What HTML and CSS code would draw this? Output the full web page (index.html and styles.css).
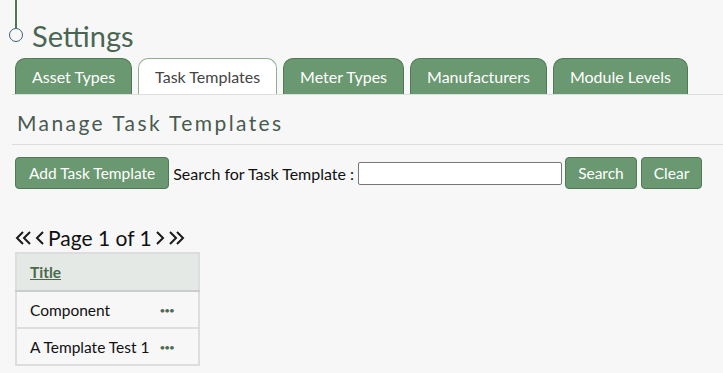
FILE: index.html
```html
<!DOCTYPE html>
<html>
<head>
    <meta charset="UTF-8">
    <meta name="viewport" content="width=device-width, initial-scale=1.0">
    <title>Settings</title>
    <link rel="stylesheet" href="styles.css">
</head>
<body>
    <div class="page">
        <div class="title-row">
            <div class="timeline">
                <div class="timeline-line"></div>
                <div class="timeline-dot"></div>
            </div>
            <h1>Settings</h1>
        </div>

        <ul class="tabs">
            <li class="tab">Asset Types</li>
            <li class="tab active">Task Templates</li>
            <li class="tab">Meter Types</li>
            <li class="tab">Manufacturers</li>
            <li class="tab">Module Levels</li>
        </ul>

        <h2 class="section-title">Manage Task Templates</h2>

        <div class="toolbar">
            <button class="btn btn-add">Add Task Template</button>
            <label for="search">Search for Task Template :</label>
            <input type="text" id="search" class="search-input">
            <button class="btn">Search</button>
            <button class="btn">Clear</button>
        </div>

        <div class="pager">
            <svg class="pager-icon" width="17" height="16" viewBox="0 0 17 16">
                <polyline points="8,2 2,8 8,14" />
                <polyline points="15,2 9,8 15,14" />
            </svg>
            <svg class="pager-icon" width="10" height="16" viewBox="0 0 10 16">
                <polyline points="8,2 2,8 8,14" />
            </svg>
            <span class="pager-text">Page 1 of 1</span>
            <svg class="pager-icon" width="10" height="16" viewBox="0 0 10 16">
                <polyline points="2,2 8,8 2,14" />
            </svg>
            <svg class="pager-icon" width="17" height="16" viewBox="0 0 17 16">
                <polyline points="2,2 8,8 2,14" />
                <polyline points="9,2 15,8 9,14" />
            </svg>
        </div>

        <table class="grid">
            <thead>
                <tr><th colspan="2"><a href="#">Title</a></th></tr>
            </thead>
            <tbody>
                <tr><td>Component</td><td class="more">&bull;&bull;&bull;</td></tr>
                <tr><td>A Template Test 1</td><td class="more">&bull;&bull;&bull;</td></tr>
            </tbody>
        </table>
    </div>
</body>
</html>
```

FILE: styles.css
```css
body {
    font-family: "Lato", "Noto Sans", sans-serif;
    margin: 0;
    background-color: #f7f7f7;
    color: #222;
}
.page {
    padding: 0 0 0 12px;
}
.title-row {
    display: flex;
    align-items: flex-end;
    height: 52px;
}
.timeline {
    align-self: flex-start;
    width: 23px;
    margin-left: -3px;
}
.timeline-line {
    width: 2px;
    height: 28px;
    margin-left: 6px;
    background-color: #4e7556;
}
.timeline-dot {
    width: 14px;
    height: 14px;
    border: 1.5px solid #3f6170;
    border-radius: 50%;
    box-sizing: border-box;
}
h1 {
    margin: 0 0 2px 0;
    font-size: 29px;
    font-weight: normal;
    color: #4a6652;
    line-height: 1;
}
.tabs {
    display: flex;
    gap: 6px;
    list-style: none;
    margin: 6px 0 0 0;
    padding: 0 0 0 3px;
    border-bottom: 1px solid #ddd;
}
.tab {
    height: 36px;
    line-height: 36px;
    padding: 0 16px;
    font-size: 16px;
    color: #fff;
    background-color: #6a9870;
    border: 1px solid #4f7a55;
    border-bottom: none;
    border-radius: 10px 10px 0 0;
    box-sizing: border-box;
}
.tab.active {
    background-color: #fff;
    color: #444;
    border-color: #8fae94;
}
.section-title {
    margin: 0;
    padding: 15px 0 9px 5px;
    font-size: 21px;
    font-weight: normal;
    letter-spacing: 2.4px;
    color: #4a5a50;
    border-bottom: 1px solid #ddd;
}
.toolbar {
    display: flex;
    align-items: center;
    gap: 4px;
    margin-top: 12px;
    padding-left: 3px;
}
.btn {
    height: 32px;
    padding: 0 12px;
    font-family: inherit;
    font-size: 15.5px;
    color: #fff;
    background-color: #6a9870;
    border: 1px solid #4f7a55;
    border-radius: 4px;
}
.btn-add {
    padding: 0 13px;
}
.toolbar label {
    font-size: 16px;
    color: #111;
}
.search-input {
    width: 204px;
    height: 23px;
    box-sizing: border-box;
    border: 1px solid #777;
    border-radius: 2px;
    margin-right: -1px;
}
.pager {
    display: flex;
    align-items: center;
    gap: 3px;
    margin-top: 35px;
    padding-left: 3px;
    font-size: 21px;
    line-height: 28px;
    color: #111;
}
.pager-icon polyline {
    fill: none;
    stroke: #1a1a1a;
    stroke-width: 2;
}
.grid {
    margin-left: 3px;
    border-collapse: collapse;
    border: 2px solid #ddd;
    font-size: 15.5px;
    color: #111;
}
.grid th {
    text-align: left;
    height: 36px;
    padding: 0 13px;
    background-color: #e5e9e5;
    border-bottom: 2px solid #ccc;
}
.grid th a {
    color: #4a6a4e;
}
.grid td {
    height: 35px;
    padding: 0 0 0 13px;
    border-bottom: 2px solid #ddd;
}
.grid td.more {
    padding: 0 24px 0 10px;
    color: #4a6a4e;
    font-size: 10px;
    letter-spacing: -1px;
}
```
